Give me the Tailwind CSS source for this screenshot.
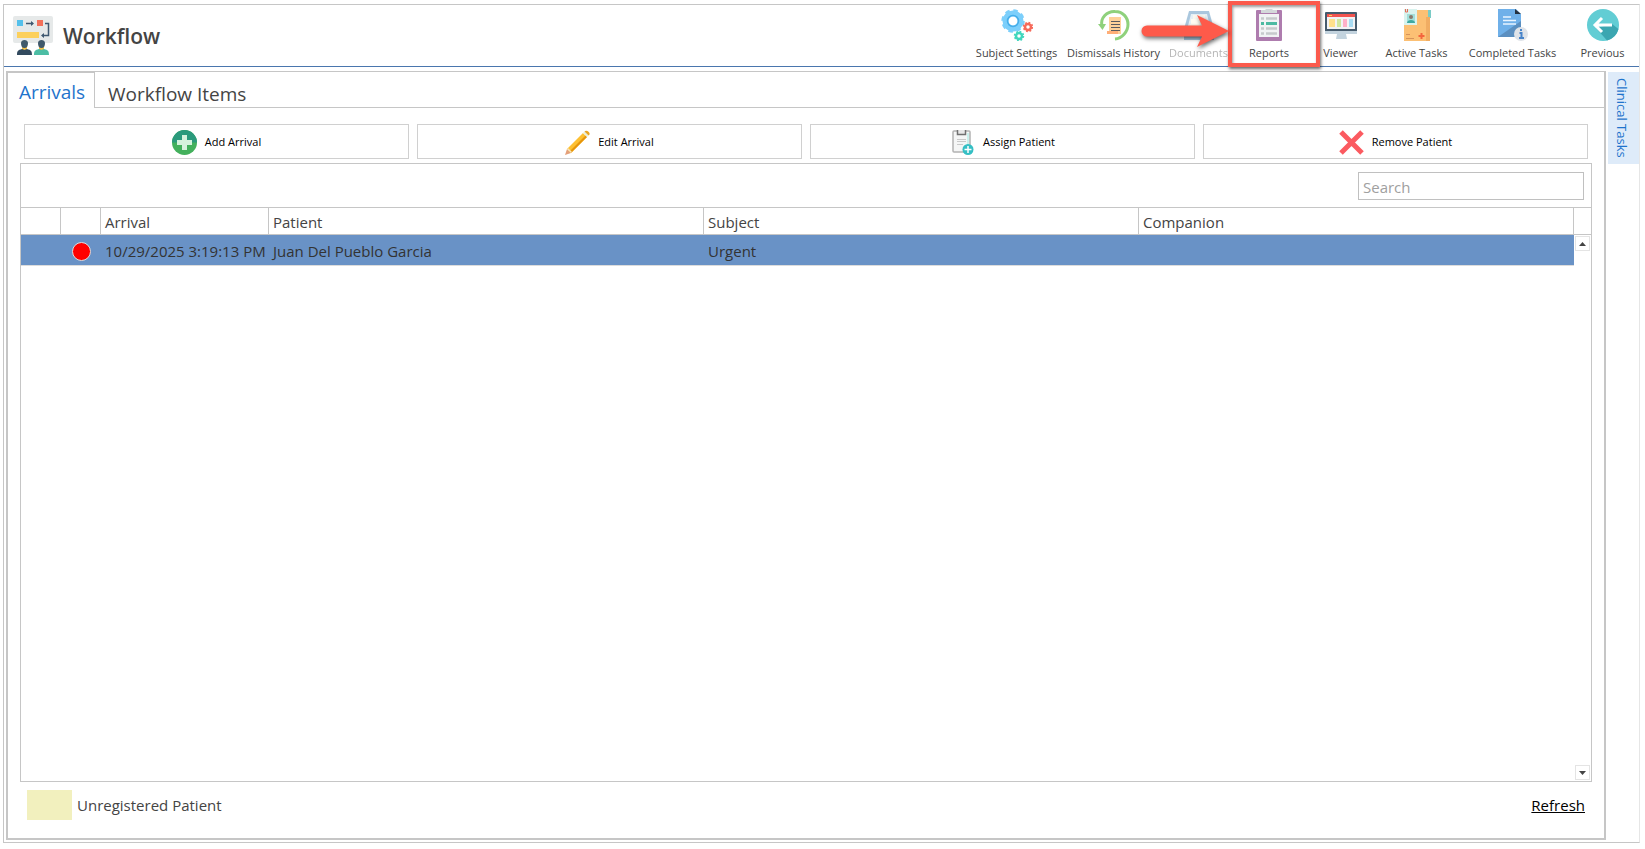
<!DOCTYPE html>
<html lang="en">
<head>
  <meta charset="UTF-8">
  <meta name="viewport" content="width=device-width, initial-scale=1.0">
  <title>Workflow</title>
  <script src="https://cdn.jsdelivr.net/npm/@tailwindcss/browser@4"></script>
</head>
<body class="bg-white text-[#444] font-['Open_Sans','Noto_Sans',sans-serif]">

<div class="min-h-screen flex flex-col pt-1 pl-[3px] pr-[5px] pb-[6px]">
<div class="flex-1 flex flex-col border border-[#c6c6c6] border-r-[#e6e6e6]">

  <!-- Header -->
  <header class="h-[62px] flex justify-between border-b border-[#4a76ae]">
    <div class="flex items-center gap-[10px] pl-[9px]">
      <svg class="w-10 h-10" viewBox="0 0 40 40">
        <rect width="40" height="27" rx="2" fill="#e6e9e9"/>
        <rect x="4" y="4" width="6" height="6" fill="#54c0eb"/>
        <rect x="24" y="4" width="6" height="6" fill="#f3705a"/>
        <rect x="4" y="16" width="22" height="6" fill="#fcd05c"/>
        <path d="M13 7.500h7M32 7.500h3.500v12h-6" fill="none" stroke="#3f5870" stroke-width="1.500"/>
        <path d="M18 5l3 2.500-3 2.500zM31 17l-3 2.500 3 2.500z" fill="#3f5870"/>
        <path d="M9 30h5v4H9zM26 30h5v4h-5z" fill="#f0c04c"/>
        <path d="M8 27c0-4 7-4 7 0 0 3-1 5-3.500 5S8 30 8 27zM25 27c0-4 7-4 7 0 0 3-1 5-3.500 5S25 30 25 27z" fill="#40596b"/>
        <path d="M4 39c0-4 1-5 5-6l2.500 1 2.500-1c4 1 5 2 5 6z" fill="#324a5e"/>
        <path d="M21 39c0-4 1-5 5-6l2.500 1 2.500-1c4 1 5 2 5 6z" fill="#4cbda4"/>
      </svg>
      <h1 class="text-[21px] font-semibold leading-7">Workflow</h1>
    </div>

    <nav class="flex items-start pt-1 pr-0.5 text-[11px] leading-4 whitespace-nowrap">
      <button class="w-[93px] flex flex-col items-center gap-1">
        <svg class="w-8 h-8" viewBox="0 0 32 32">
          <circle cx="12" cy="12" r="7.500" fill="none" stroke="#7ccffb" stroke-width="6"/>
          <circle cx="12" cy="12" r="10.500" fill="none" stroke="#7ccffb" stroke-width="2.500" stroke-dasharray="4.500 3.750"/>
          <circle cx="12" cy="12" r="5.500" fill="none" stroke="#46aeea" stroke-width="1.500"/>
          <circle cx="27" cy="18" r="3" fill="none" stroke="#f6695a" stroke-width="2.500"/>
          <circle cx="27" cy="18" r="4.500" fill="none" stroke="#f6695a" stroke-width="1.500" stroke-dasharray="1.800 1.730"/>
          <circle cx="18" cy="27" r="3" fill="none" stroke="#41d6bd" stroke-width="2.500"/>
          <circle cx="18" cy="27" r="4.500" fill="none" stroke="#41d6bd" stroke-width="1.500" stroke-dasharray="1.800 1.730"/>
        </svg>
        Subject Settings
      </button>
      <button class="w-[101px] flex flex-col items-center gap-1">
        <svg class="w-8 h-8" viewBox="0 0 32 32">
          <path d="M4 17C2 9 9 2 17 2.500c8 0 13 6 13 13S24 29.500 17 30" fill="none" stroke="#8fd17c" stroke-width="3"/>
          <path d="M0 15h8l-3.500 6z" fill="#8fd17c"/>
          <path d="M11 8h12v17H11z" fill="#fed198"/>
          <path d="M9 22h11v3H9z" fill="#ffae78"/>
          <path d="M13 12.500h9M13 15.500h9M13 18.500h9M13 21.500h9" stroke="#5b5b5f" stroke-width="1"/>
        </svg>
        Dismissals History
      </button>
      <button disabled class="w-[69px] flex flex-col items-center gap-1 opacity-40">
        <svg class="w-8 h-8" viewBox="0 0 32 32">
          <path d="M6 2h20l5 18v11H1V20z" fill="#2c75ad"/>
          <path d="M8 5h16l4 16H4z" fill="#c3dbe9"/>
          <path d="M10 6h12v4H10z" fill="#f4f0dc"/>
          <path d="M8 10h15v5H8z" fill="#fff6dd"/>
          <path d="M7 15h18v6H7z" fill="#f4ead0"/>
        </svg>
        Documents
      </button>
      <div class="relative w-[72px]">
        <button class="w-full flex flex-col items-center gap-1">
          <svg class="w-8 h-8" viewBox="0 0 32 32">
            <rect x="3" y="1" width="26" height="31" rx="1" fill="#ae7cae"/>
            <path d="M6 5h20v23H6z" fill="#f1f3f4"/>
            <path d="M8 1h4c1-2 7-2 8 0h4v3H8z" fill="#d4d8da"/>
            <path d="M8 9.500h3M13 9.500h11M8 19.500h3M13 19.500h11M8 24.500h3M13 24.500h11" stroke="#c6cacc" stroke-width="2.500"/>
            <path d="M8 14.500h3M13 14.500h11" stroke="#4cbaa2" stroke-width="3"/>
          </svg>
          Reports
        </button>
        <!-- Callout box and arrow -->
        <div class="absolute -top-2 -left-[5px] w-[92px] h-[66px] border-4 border-[#fb5a4c] shadow-[1px_2px_3px_rgba(0,0,0,0.6),inset_1px_2px_3px_rgba(0,0,0,0.4)]"></div>
        <svg class="absolute top-1 -left-[92px] w-[92px] h-10 drop-shadow-[1px_2px_2px_rgba(0,0,0,0.6)]" viewBox="0 0 92 40">
          <path d="M6 12.500h55L56 2l32 16-32 16 5-10.500H6a5.500 5.500 0 0 1 0-11z" fill="#fe5a4a"/>
        </svg>
      </div>
      <button class="w-[71px] flex flex-col items-center gap-1">
        <svg class="w-8 h-8" viewBox="0 0 32 32">
          <path d="M12 25h9l1 5H11z" fill="#c3d3de"/>
          <rect x="0" y="3" width="32" height="22" rx="1" fill="#465b6d"/>
          <path d="M0 22h32v3H0z" fill="#c3d3de"/>
          <path d="M2 5h28v15H2z" fill="#f2f3f5"/>
          <path d="M2 5h28v3H2z" fill="#f25450"/>
          <path d="M4 6.500h3" stroke="#fcd05c" stroke-width="1"/>
          <path d="M4 10h6v8H4z" fill="#ffe08d"/>
          <path d="M12 10h4v8h-4z" fill="#cfe7a0"/>
          <path d="M18 10h4v8h-4z" fill="#ffb0c8"/>
          <path d="M24 10h4v8h-4z" fill="#a8dcf3"/>
        </svg>
        Viewer
      </button>
      <button class="w-[81px] flex flex-col items-center gap-1">
        <svg class="w-8 h-8" viewBox="0 0 32 32">
          <path d="M26 1h4v8h-4z" fill="#7acbc6"/>
          <path d="M3 1h24v31H3z" fill="#fcc074"/>
          <path d="M25 8h4v24h-4z" fill="#f1ad63"/>
          <path d="M3 0h13v16H3z" fill="#d9f3ee"/>
          <path d="M6 5h8v9H6z" fill="#a2dfda"/>
          <circle cx="10" cy="8" r="2" fill="#8a7a6c"/>
          <path d="M6 14c0-4 8-4 8 0z" fill="#3fa9a1"/>
          <path d="M4.500 0v3h2V0" fill="none" stroke="#e66a55" stroke-width="1"/>
          <path d="M5 25.500h4M5 29.500h8" stroke="#d6935a" stroke-width="1"/>
          <path d="M20.500 24v6M17.500 27h6" stroke="#f4663e" stroke-width="2"/>
        </svg>
        Active Tasks
      </button>
      <button class="w-[111px] flex flex-col items-center gap-1">
        <svg class="w-8 h-8" viewBox="0 0 32 32">
          <path d="M1 0h18l5 5v23H1z" fill="#6fb0e9"/>
          <path d="M1 28L24 12v16z" fill="#5b8fc0"/>
          <path d="M18 0l6 5h-6z" fill="#25313f"/>
          <path d="M6 8h8M6 11.500h13M6 15h13" stroke="#e9f4ff" stroke-width="1.500"/>
          <circle cx="24" cy="25" r="7" fill="#dfe3e8"/>
          <path d="M24 20v2M22.500 24h2v5M22 29h5" fill="none" stroke="#4884c9" stroke-width="2"/>
        </svg>
        Completed Tasks
      </button>
      <button class="w-[69px] flex flex-col items-center gap-1">
        <svg class="w-8 h-8" viewBox="0 0 32 32">
          <circle cx="16" cy="16" r="16" fill="#62cdd4"/>
          <path d="M25 15l6.500 5A16 16 0 0 1 20 31.500L9 19z" fill="#3ba6b1"/>
          <path d="M25 16H9M15 9l-7 7 7 7" fill="none" stroke="#fff" stroke-width="3"/>
        </svg>
        Previous
      </button>
    </nav>
  </header>

  <div class="flex-1 flex gap-0.5 pt-1 pl-0.5 pb-0.5">
    <!-- Main panel -->
    <main class="flex-1 flex flex-col border-2 border-t border-[#c6c6c6]">
      <div class="flex h-9 leading-6">
        <button class="w-[87px] pt-0.5 pl-0.5 border-t border-r border-[#c6c6c6] text-[19px] text-[#1f74cc]">Arrivals</button>
        <div class="flex-1 flex border-b border-[#c6c6c6]">
          <button class="px-[13px] pt-2 text-[19px]">Workflow Items</button>
        </div>
      </div>

      <div class="flex-1 flex flex-col px-3 pt-4 pb-[18px]">
        <!-- Actions -->
        <div class="grid grid-cols-4 gap-2 px-1 mb-1 text-[11px] text-black">
          <button class="h-[35px] pt-0.5 border border-[#d0d0d0] flex items-center justify-center gap-2">
            <svg class="w-[25px] h-[25px]" viewBox="0 0 25 25">
              <circle cx="12.500" cy="12.500" r="12.500" fill="#43b05c"/>
              <path d="M0 12.500a12.500 12.500 0 0 1 25 0z" fill="#2b9a7c"/>
              <path d="M10 5h5v5h5v5h-5v5h-5v-5H5v-5h5z" fill="#d5f2dc"/>
            </svg>
            Add Arrival
          </button>
          <button class="h-[35px] pt-0.5 border border-[#d0d0d0] flex items-center justify-center gap-2">
            <svg class="w-[25px] h-[25px]" viewBox="0 0 25 25">
              <path d="M0 25l2-6 4 4z" fill="#e4a07a"/>
              <path d="M2 19L18 3l4 4L6 23z" fill="#fdc032"/>
              <path d="M4.500 21.500L20.500 5.500 22 7 6 23z" fill="#e6950b"/>
              <path d="M2 19l1-1 4 4-1 1z" fill="#f6e3bd"/>
              <path d="M18 3l1.500-1.500 4 4L22 7z" fill="#e7edda"/>
              <path d="M19.500 1.500c2-2 6 1 5 3l-1 1z" fill="#e8a422"/>
            </svg>
            Edit Arrival
          </button>
          <button class="h-[35px] pt-0.5 border border-[#d0d0d0] flex items-center justify-center gap-2">
            <svg class="w-[25px] h-[25px]" viewBox="0 0 25 25">
              <rect x="3" y="1" width="17" height="21" rx="1" fill="#f5f6f6" stroke="#b3b3b3" stroke-width="1.500"/>
              <path d="M18 3v12" stroke="#bdeee9" stroke-width="1.500"/>
              <path d="M7.500 0v4.500h8V0" fill="#e8e8e8" stroke="#707070" stroke-width="1.500"/>
              <path d="M7 9.500h9M7 11.500h9M7 14.500h6" stroke="#c9c9c9" stroke-width="1"/>
              <circle cx="18" cy="19.500" r="5.500" fill="#35bfc4"/>
              <path d="M18 16v7M14.500 19.500h7" stroke="#fff" stroke-width="1.500"/>
            </svg>
            Assign Patient
          </button>
          <button class="h-[35px] pt-0.5 border border-[#d0d0d0] flex items-center justify-center gap-2">
            <svg class="w-[25px] h-[25px]" viewBox="0 0 25 25">
              <path d="M2 2l21 21M23 2L2 23" stroke="#fb5a60" stroke-width="5"/>
            </svg>
            Remove Patient
          </button>
        </div>

        <!-- Arrivals grid -->
        <section class="flex-1 flex flex-col border border-[#c6c6c6] text-[15px]">
          <div class="h-11 flex justify-end pt-2 pr-[7px] border-b border-[#c6c6c6]">
            <input type="text" aria-label="Search" placeholder="Search" class="w-[226px] h-7 px-1 pt-0.5 border border-[#c0c0c0] placeholder:text-[#a0a0a0]">
          </div>
          <div class="flex-1 flex">
            <div class="flex-1">
              <table class="w-full table-fixed border-separate border-spacing-0 text-left">
                <colgroup>
                  <col class="w-10"><col class="w-10"><col class="w-[168px]"><col><col><col>
                </colgroup>
                <thead>
                  <tr class="h-[27px] *:border-r *:border-b *:border-[#c6c6c6] *:px-1 *:pt-0.5 *:pb-0 *:font-normal *:leading-5">
                    <th></th>
                    <th></th>
                    <th>Arrival</th>
                    <th>Patient</th>
                    <th>Subject</th>
                    <th>Companion</th>
                  </tr>
                </thead>
                <tbody>
                  <tr class="h-[31px] bg-[#6992c6] text-[#333] *:border-b *:border-[#dcdcdc] *:px-1 *:pt-0.5 *:pb-0 *:leading-5">
                    <td></td>
                    <td><div class="mx-auto size-[19px] rounded-full bg-[#f00] border border-[#ddd]"></div></td>
                    <td><div class="overflow-hidden whitespace-nowrap">10/29/2025 3:19:13 PM</div></td>
                    <td>Juan Del Pueblo Garcia</td>
                    <td>Urgent</td>
                    <td></td>
                  </tr>
                </tbody>
              </table>
            </div>
            <div class="w-[17px] flex flex-col">
              <div class="h-[27px] border-b border-[#c6c6c6]"></div>
              <div class="flex-1 flex flex-col justify-between py-px pl-px">
                <button aria-label="Scroll up" class="size-[15px] border border-[#e4e4e4] bg-white flex items-center justify-center">
                  <svg class="w-[7px] h-1" viewBox="0 0 7 4"><path d="M0 4l3.500-4L7 4z" fill="#444"/></svg>
                </button>
                <button aria-label="Scroll down" class="size-[15px] border border-[#e4e4e4] bg-white flex items-center justify-center">
                  <svg class="w-[7px] h-1" viewBox="0 0 7 4"><path d="M0 0l3.500 4L7 0z" fill="#444"/></svg>
                </button>
              </div>
            </div>
          </div>
        </section>

        <!-- Legend -->
        <div class="flex items-center justify-between pt-2 px-[7px] text-[15px]">
          <div class="flex items-center gap-[5px]">
            <div class="w-[45px] h-[30px] bg-[#f2f0be]"></div>
            <span class="pt-px">Unregistered Patient</span>
          </div>
          <a href="#" class="pt-px text-black underline">Refresh</a>
        </div>
      </div>
    </main>

    <!-- Side tab -->
    <aside class="mt-px w-[31px]">
      <button class="w-full h-[92px] pr-1 bg-[#deebf9] text-[#1f74cc] text-[13px] flex items-center justify-center">
        <span class="[writing-mode:vertical-rl] whitespace-nowrap">Clinical Tasks</span>
      </button>
    </aside>
  </div>

</div>
</div>

</body>
</html>
